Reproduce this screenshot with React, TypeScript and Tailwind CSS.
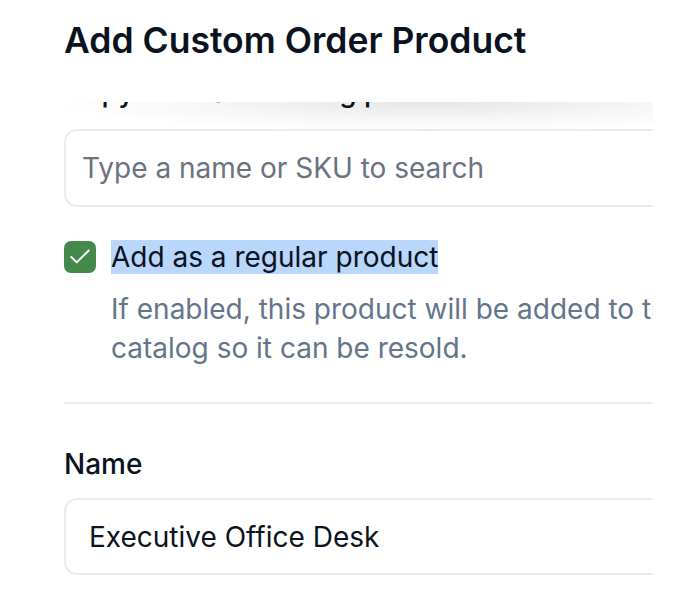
import React, { useLayoutEffect, useRef } from 'react';
import { Check } from 'lucide-react';

const AddCustomProduct: React.FC = () => {
  const scrollRef = useRef<HTMLDivElement>(null);

  // the body is scrolled a little, the search label sits under the header
  useLayoutEffect(() => {
    if (scrollRef.current) scrollRef.current.scrollTop = 26;
  }, []);

  return (
    <div className="h-[596px] w-[688px] overflow-hidden bg-white font-['Inter',sans-serif] text-[#0b1220]">
      <div className="ml-16 w-[589px]">
        <h2 className="pt-[21px] text-[35.5px] leading-[40px] font-semibold whitespace-nowrap">
          Add Custom Order Product
        </h2>

        <div className="relative mt-[41px]">
          <div className="pointer-events-none absolute inset-x-0 top-0 z-10 h-[30px] bg-[radial-gradient(ellipse_65%_100%_at_62%_0%,rgba(0,0,0,0.1),rgba(0,0,0,0.03)_60%,transparent_100%)]" />

          <div ref={scrollRef} className="h-[494px] overflow-hidden">
            <div className="w-[680px] pb-10">
              <label className="mb-[21px] block text-[28px] leading-8 font-medium">
                Copy from an existing product
              </label>
              <div className="flex h-[78px] items-center rounded-[13px] border-2 border-[#ececE7] px-4">
                <span className="text-[28px] text-[#6b7280]">Type a name or SKU to search</span>
              </div>

              <div className="mt-[31px] flex items-center gap-[15px] leading-[38.4px]">
                <div className="flex h-8 w-8 shrink-0 items-center justify-center rounded-[7px] bg-[#45884c]">
                  <Check className="h-[26px] w-[26px] text-white" strokeWidth={1.8} />
                </div>
                <span className="text-[28px]">
                  <span className="bg-[#b9d6fb]">Add as a regular product</span>
                </span>
              </div>
              <p className="mt-[14px] pl-[47px] text-[28px] leading-[39px] text-[#64748b]">
                If enabled, this product will be added to the catalog so it can be resold.
              </p>

              <div className="mt-[34px] h-[2px] bg-[#ececE7]" />

              <label className="mt-10 block text-[28px] leading-10 font-medium">Name</label>
              <div className="mt-[14px] flex h-[77px] items-center rounded-[13px] border-2 border-[#ececE7] px-[23px]">
                <span className="text-[28px]">Executive Office Desk</span>
              </div>
            </div>
          </div>
        </div>
      </div>
    </div>
  );
};

export default function App() {
  return <AddCustomProduct />;
}
